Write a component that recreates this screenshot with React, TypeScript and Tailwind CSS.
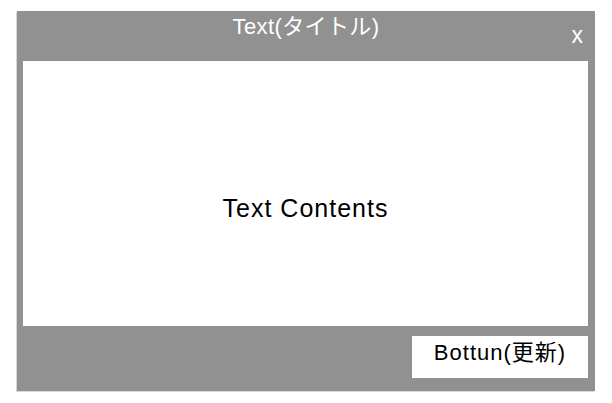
import React from "react";

export default function App() {
  const font = { fontFamily: '"Liberation Sans", "Noto Sans CJK JP", sans-serif' };
  return (
    <div className="w-[612px] h-[403px] bg-white pt-[11px] pl-[17px]" style={font}>
      <div className="w-[578px] h-[380px] bg-[#919191] flex flex-col shadow-[-1px_1px_0_#d6d6d6]">
        <div className="relative h-[50px] flex justify-center">
          <span className="text-white text-[22px] leading-none mt-[5px] h-[22px] tracking-[0.4px]">Text(タイトル)</span>
          <span className="absolute right-[12px] top-[13px] text-white text-[23px] leading-none">x</span>
        </div>
        <div className="ml-[6px] mr-[7px] h-[265px] bg-white flex justify-center pt-[135px]">
          <span className="text-black text-[25px] leading-none h-[25px] tracking-[1px]">Text Contents</span>
        </div>
        <div className="flex justify-end pt-[10px] pr-[7px]">
          <div className="w-[176px] h-[42px] bg-white flex justify-center pt-[6px] text-black text-[22px] leading-none tracking-[1px]">
            Bottun(更新)
          </div>
        </div>
      </div>
    </div>
  );
}
